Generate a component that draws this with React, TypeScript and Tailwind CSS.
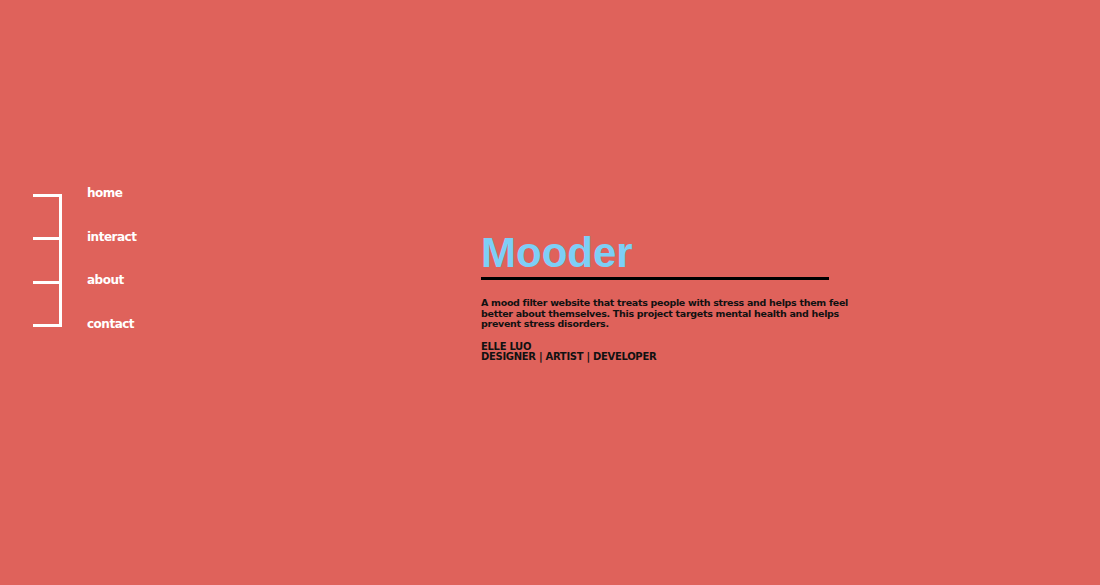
const navItems = ["home", "interact", "about", "contact"];

function Nav() {
  return (
    <nav className="flex items-start ml-[33px] mt-[186px]">
      <div className="mt-[8px] w-[29px] h-[133px] border-r-[3px] border-white flex flex-col justify-between">
        {navItems.map((item) => (
          <span key={item} className="block h-[3px] w-full bg-white" />
        ))}
      </div>
      <ul className="ml-[25px] h-[145px] flex flex-col justify-between">
        {navItems.map((item) => (
          <li key={item}>
            <a href="#" className="block text-[12px] leading-[14px] tracking-[-0.5px] font-bold text-white">
              {item}
            </a>
          </li>
        ))}
      </ul>
    </nav>
  );
}

export default function App() {
  return (
    <div className="h-[585px] w-full bg-[#df625b] flex font-['DejaVu_Sans',Verdana,sans-serif] overflow-hidden">
      <div className="w-[481px] shrink-0">
        <Nav />
      </div>
      <main className="mt-[232px] w-[376px]">
        <h1 className="font-['Liberation_Sans',Arial,sans-serif] text-[42px] leading-none font-bold text-[#7dcff6]">
          Mooder
        </h1>
        <div className="mt-[3px] w-[348px] h-[3px] bg-black" />
        <p className="mt-[18px] text-[9.5px] leading-[10.5px] tracking-[-0.3px] font-bold text-[#111]">
          A mood filter website that treats people with stress and helps them feel better about
          themselves. This project targets mental health and helps prevent stress disorders.
        </p>
        <p className="mt-[12px] text-[10px] leading-[10.5px] tracking-[-0.3px] font-bold text-[#111]">
          ELLE LUO
          <br />
          DESIGNER | ARTIST | DEVELOPER
        </p>
      </main>
    </div>
  );
}
